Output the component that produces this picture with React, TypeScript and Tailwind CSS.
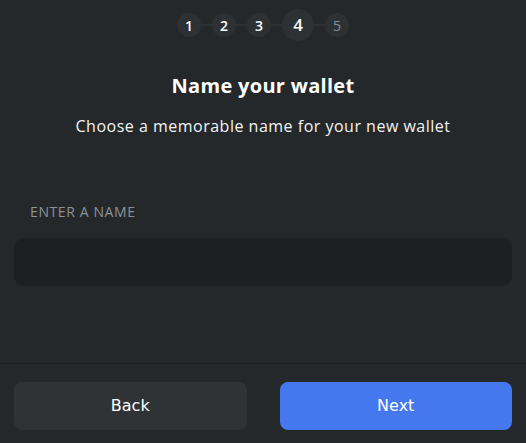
import React from "react";

const steps = [1, 2, 3, 4, 5];
const current = 4;

function Stepper() {
  return (
    <div className="flex items-center justify-center pt-[9px]">
      {steps.map((n, i) => {
        const active = n === current;
        const done = n < current;
        return (
          <React.Fragment key={n}>
            {i > 0 && <div className="h-[2px] w-[11px] bg-[#2d3134]" />}
            <div
              className={
                active
                  ? "flex h-[32px] w-[32px] items-center justify-center rounded-full bg-[#2d3134] text-[17px] font-semibold text-white"
                  : done
                    ? "flex h-[24px] w-[24px] items-center justify-center rounded-full bg-[#2d3134] text-[14px] font-semibold text-white"
                    : "flex h-[24px] w-[24px] items-center justify-center rounded-full bg-[#2d3134] text-[14px] font-medium text-[#8b9096]"
              }
            >
              {n}
            </div>
          </React.Fragment>
        );
      })}
    </div>
  );
}

export default function App() {
  return (
    <div
      className="flex h-[443px] w-[526px] flex-col bg-[#25282a] text-white"
      style={{ fontFamily: '"Open Sans", "Noto Sans", sans-serif' }}
    >
      <div className="flex-1">
        <Stepper />

        <h1 className="mt-[32px] text-center text-[20px] font-bold leading-[26px] tracking-[0.3px]">
          Name your wallet
        </h1>
        <p className="mt-[17px] text-center text-[16px] leading-[20px] tracking-[0.5px] text-[#f2f3f4]">
          Choose a memorable name for your new wallet
        </p>

        <label className="mt-[67px] block px-[30px] text-[14px] leading-[18px] tracking-[0.6px] text-[#8a9299]">
          ENTER A NAME
        </label>
        <div className="px-[14px] pt-[17px]">
          <input
            className="h-[48px] w-full rounded-[10px] bg-[#1e1f21] px-4 text-[15px] text-white outline-none"
            type="text"
          />
        </div>
      </div>

      <div className="h-px bg-[#1b1d1f]" />

      <div className="flex gap-[33px] px-[14px] pb-[13px] pt-[18px]">
        <button
          className="h-[48px] flex-1 rounded-[8px] bg-[#2f3336] text-[16px] text-white"
          style={{ fontFamily: '"DejaVu Sans", sans-serif' }}
        >
          Back
        </button>
        <button
          className="h-[48px] flex-1 rounded-[8px] bg-[#4577ee] text-[16px] text-white"
          style={{ fontFamily: '"DejaVu Sans", sans-serif' }}
        >
          Next
        </button>
      </div>
    </div>
  );
}
